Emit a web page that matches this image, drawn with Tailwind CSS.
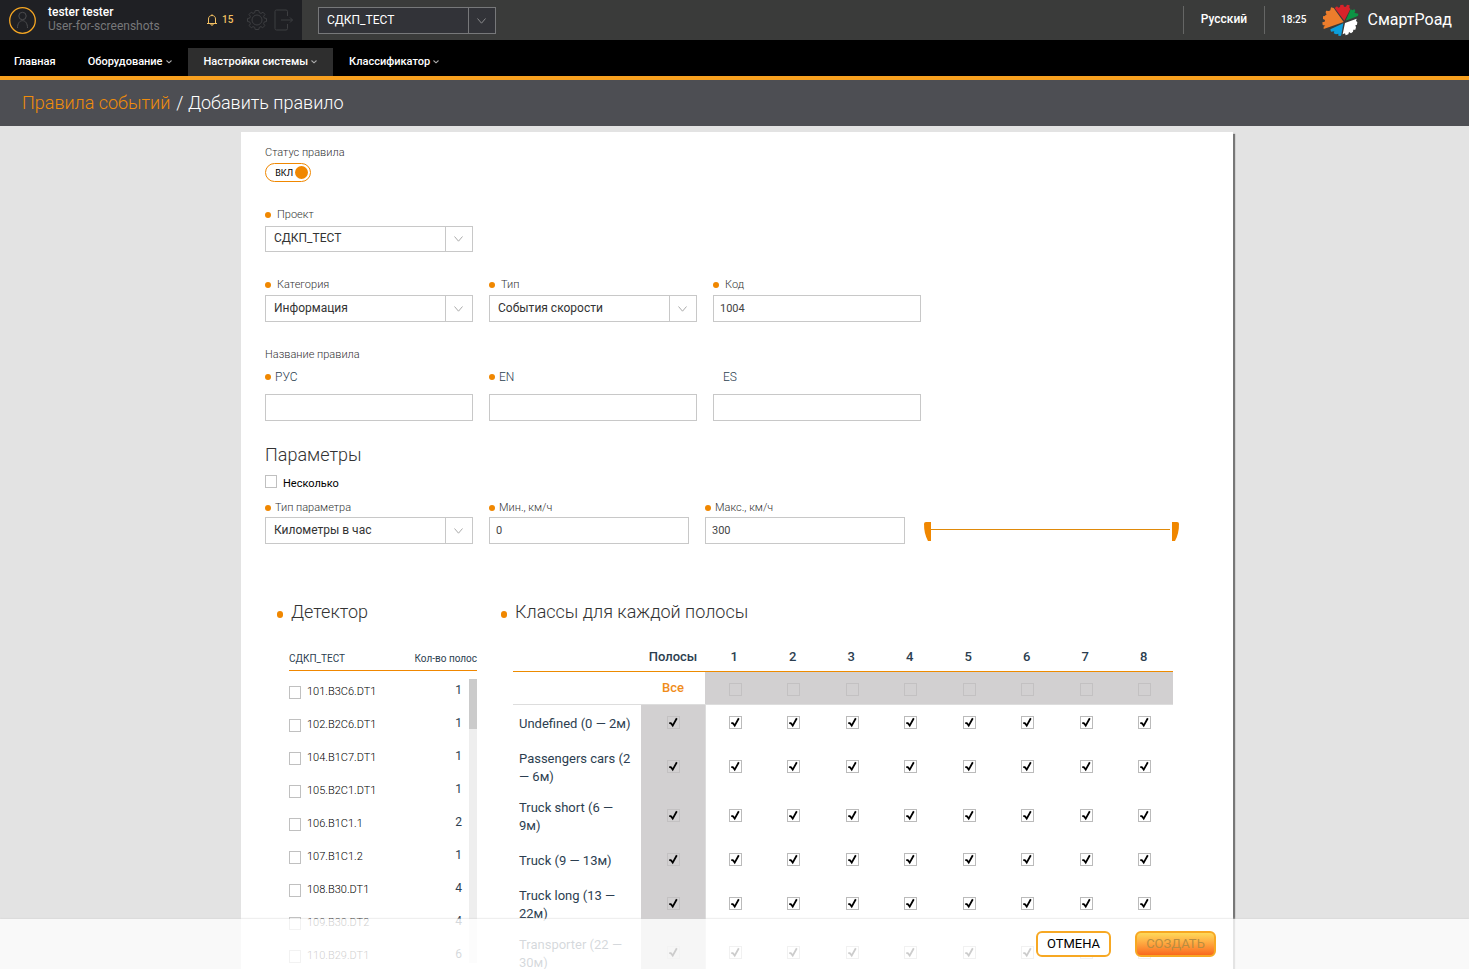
<!DOCTYPE html>
<html lang="ru">
<head>
<meta charset="utf-8">
<title>СмартРоад — Добавить правило</title>
<script src="https://cdn.jsdelivr.net/npm/@tailwindcss/browser@4"></script>
</head>
<body class="relative flex h-screen flex-col overflow-hidden bg-[#e3e3e3] font-['Roboto','Open_Sans',sans-serif] text-xs text-[#333]">
<svg class="hidden">
  <symbol id="tick" viewBox="0 0 13 13"><path d="M2.300 6.800 L4 7.300 L5.700 9.600 L9.800 2.300" fill="none" stroke="#000" stroke-width="1.800"/></symbol>
  <symbol id="down" viewBox="0 0 9 6"><path d="M.5 .5 L4.5 5.2 L8.5 .5" fill="none" stroke="currentColor"/></symbol>
  <symbol id="caret" viewBox="0 0 6 4"><path d="M.5 .5 L3 2.8 L5.5 .5" fill="none" stroke="currentColor" stroke-width="1.1"/></symbol>
</svg>

<header class="flex h-10 shrink-0 bg-[#3a3b3a] text-white">
  <div class="flex h-10 w-[302px] items-center bg-[#1f2024] pl-[9px]">
    <svg class="h-[27px] w-[27px]" viewBox="0 0 27 27" fill="none"><circle cx="13.5" cy="13.5" r="12.8" stroke="#f5a623" stroke-width="1.3"/><circle cx="13.5" cy="9" r="3.7" stroke="#4c4c4e"/><path d="M8.5 21 C8.5 16.5 10.5 13.7 13.5 13.7 C16.500 13.7 18.500 16.5 18.500 21" stroke="#4c4c4e"/></svg>
    <div class="ml-3 w-[158px] pb-[2px] leading-[14px]">
      <div class="font-medium">tester tester</div>
      <div class="text-[#77787a]">User-for-screenshots</div>
    </div>
    <button class="flex items-center gap-1 text-[10px] font-medium text-[#f3c062]" aria-label="Уведомления">
      <svg class="h-3 w-3" viewBox="0 0 12 12" fill="none" stroke="currentColor"><path d="M1 9.5 H11 M2.500 9.300 V5 C2.500 2.600 4 1.500 6 1.500 C8 1.500 9.500 2.600 9.500 5 V9.300 M4.800 10 C4.800 11.800 7.200 11.800 7.200 10 M6 .3 V1.500"/></svg>15
    </button>
    <button class="ml-[13px]" aria-label="Настройки"><svg class="h-[22px] w-[22px]" viewBox="0 0 22 22" fill="none" stroke="#3d3e41"><circle cx="11" cy="11" r="5"/><path stroke-linejoin="round" d="M9.200 1.500 H12.800 L13.300 3.700 L15 4.400 L17 3.200 L19 5.500 L17.600 7.300 L18.300 9.100 L20.500 9.500 V12.500 L18.300 12.900 L17.600 14.700 L18.800 16.600 L16.700 18.800 L15 17.600 L13.300 18.300 L12.800 20.500 H9.200 L8.700 18.300 L7 17.600 L5.300 18.800 L3.200 16.600 L4.400 14.700 L3.700 12.900 L1.500 12.500 V9.500 L3.700 9.100 L4.400 7.300 L3 5.500 L5.300 3.200 L7 4.400 L8.700 3.700 Z"/></svg></button>
    <button class="ml-[6px]" aria-label="Выход"><svg class="h-[22px] w-5" viewBox="0 0 20 22" fill="none" stroke="#3d3e41"><path d="M13.500 7 V2.500 Q13.500 1 12 1 H2.500 Q1 1 1 2.500 V19.500 Q1 21 2.500 21 H12 Q13.500 21 13.500 19.500 V15 M7 11 H18.500 M16 8.500 L18.500 11 L16 13.500"/></svg></button>
  </div>
  <div class="relative mt-[7px] ml-4 h-[27px] w-[178px]">
    <select aria-label="Проект" class="h-full w-full appearance-none border border-[#77787a] bg-[#323338] pr-8 pb-[2px] pl-2 text-xs text-white"><option>СДКП_ТЕСТ</option></select>
    <span class="pointer-events-none absolute inset-y-0 right-0 flex w-7 items-center justify-center border border-[#77787a] pr-[2px] text-[#88898b]"><svg class="h-[6px] w-[9px]"><use href="#down"/></svg></span>
  </div>
  <div class="ml-auto flex items-center pr-[17px]">
    <span class="h-7 w-px bg-[#656665]"></span>
    <button class="px-[17px] pb-[2px] text-xs font-medium">Русский</button>
    <span class="h-7 w-px bg-[#656665]"></span>
    <span class="px-4 text-[10px] font-medium">18:25</span>
    <svg class="h-[33px] w-[37px]" viewBox="488 12 111 99">
      <path fill="#ec7d2c" d="M553 66 L523 24 L515 22 L513 31 L509 33 L500 32 L499 39 L502 43 L496 48 L491 49 L491 57 L497 60 L496 65 L489 67 L490 75 L498 77 L493 80 L493 87 Z"/>
      <path fill="#d8232a" d="M555 62 L526 24 L533 19 L537 23 L542 21 L543 15 L552 14 L554 20 L560 20 L563 14 L571 16 L570 23 L573 27 Z"/>
      <path fill="#0c9444" d="M559 62 L574 28 L580 31 L585 27 L588 34 L585 38 L590 40 L597 41 L596 47 L590 50 Z"/>
      <path fill="#fff" d="M557 69 L592 56 L590 63 L594 66 L593 74 L588 76 L590 82 L588 89 L582 89 L581 95 L575 100 L569 96 L567 103 L559 106 L557 100 L550 103 Z"/>
      <path fill="#0c9fdc" d="M552 70 L546 104 L544 108 L537 107 L537 101 L530 103 L523 100 L525 94 L515 95 L513 88 Z"/>
    </svg>
    <span class="ml-2 text-base">СмартРоад</span>
  </div>
</header>

<nav class="flex h-10 shrink-0 items-end border-b-4 border-[#f7a01f] bg-black text-[11px] font-medium text-white">
  <a href="#" class="flex h-7 items-center pr-4 pl-[14px]">Главная</a>
  <a href="#" class="flex h-7 items-center gap-[3px] px-4">Оборудование<svg class="h-1 w-[6px] text-[#aaa]"><use href="#caret"/></svg></a>
  <a href="#" class="flex h-7 items-center gap-[3px] bg-[#2e2e2e] px-4">Настройки системы<svg class="h-1 w-[6px] text-[#aaa]"><use href="#caret"/></svg></a>
  <a href="#" class="flex h-7 items-center gap-[3px] px-4">Классификатор<svg class="h-1 w-[6px] text-[#aaa]"><use href="#caret"/></svg></a>
</nav>

<h1 class="flex h-[46px] shrink-0 items-center gap-[6px] bg-[#4d4e53] px-[22px] text-lg font-light text-white"><a href="#" class="text-[#f08c0a]">Правила событий</a><span>/ Добавить правило</span></h1>

<main class="min-h-0 flex-1 overflow-y-auto pt-[6px] pl-[5px] [scrollbar-width:none]">
  <form class="mx-auto w-full max-w-[992px] bg-white px-6 pt-[13px] shadow-[2px_2px_1px_#777]">
    <div class="text-[11px] leading-4 font-light">Статус правила</div>
    <button type="button" role="switch" aria-checked="true" class="mt-[2px] flex h-[19px] w-[46px] items-center justify-end gap-[2px] rounded-full border border-[#f08700] pr-[2px] text-[9px] text-black">ВКЛ<span class="h-[13px] w-[13px] rounded-full bg-[#f08700]"></span></button>

    <div class="mt-[25px] w-52">
      <label for="project" class="flex items-center gap-[6px] text-[11px] leading-4 font-light"><i class="h-[6px] w-[6px] rounded-full bg-[#f08700]"></i>Проект</label>
      <div class="relative mt-[3px] h-[26px]">
        <select id="project" class="h-full w-full appearance-none border border-[#c8c8c8] bg-white pr-8 pb-[2px] pl-2 text-xs text-[#333]"><option>СДКП_ТЕСТ</option></select>
        <span class="pointer-events-none absolute inset-y-0 right-0 flex w-7 items-center justify-center border border-[#c8c8c8] pr-[2px] text-[#aaa]"><svg class="h-[6px] w-[9px]"><use href="#down"/></svg></span>
      </div>
    </div>

    <div class="mt-[25px] flex gap-4">
      <div class="w-52">
        <label for="category" class="flex items-center gap-[6px] text-[11px] leading-4 font-light"><i class="h-[6px] w-[6px] rounded-full bg-[#f08700]"></i>Категория</label>
        <div class="relative mt-[2px] h-[27px]">
          <select id="category" class="h-full w-full appearance-none border border-[#c8c8c8] bg-white pr-8 pb-[2px] pl-2 text-xs text-[#333]"><option>Информация</option></select>
          <span class="pointer-events-none absolute inset-y-0 right-0 flex w-7 items-center justify-center border border-[#c8c8c8] pr-[2px] text-[#aaa]"><svg class="h-[6px] w-[9px]"><use href="#down"/></svg></span>
        </div>
      </div>
      <div class="w-52">
        <label for="kind" class="flex items-center gap-[6px] text-[11px] leading-4 font-light"><i class="h-[6px] w-[6px] rounded-full bg-[#f08700]"></i>Тип</label>
        <div class="relative mt-[2px] h-[27px]">
          <select id="kind" class="h-full w-full appearance-none border border-[#c8c8c8] bg-white pr-8 pb-[2px] pl-2 text-xs text-[#333]"><option>События скорости</option></select>
          <span class="pointer-events-none absolute inset-y-0 right-0 flex w-7 items-center justify-center border border-[#c8c8c8] pr-[2px] text-[#aaa]"><svg class="h-[6px] w-[9px]"><use href="#down"/></svg></span>
        </div>
      </div>
      <div class="w-52">
        <label for="code" class="flex items-center gap-[6px] text-[11px] leading-4 font-light"><i class="h-[6px] w-[6px] rounded-full bg-[#f08700]"></i>Код</label>
        <input id="code" value="1004" class="mt-[2px] block h-[27px] w-full border border-[#c8c8c8] px-[6px] text-[11px] text-[#444]">
      </div>
    </div>

    <div class="mt-[25px] text-[11px] leading-4 font-light">Название правила</div>
    <div class="mt-[6px] flex gap-4 text-[#2c3e50]">
      <div class="w-52">
        <label for="name-ru" class="flex items-center gap-1 leading-4 font-light"><i class="h-[6px] w-[6px] rounded-full bg-[#f08700]"></i>РУС</label>
        <input id="name-ru" class="mt-[9px] block h-[27px] w-full border border-[#c8c8c8] px-[6px] text-[11px]">
      </div>
      <div class="w-52">
        <label for="name-en" class="flex items-center gap-1 leading-4 font-light"><i class="h-[6px] w-[6px] rounded-full bg-[#f08700]"></i>EN</label>
        <input id="name-en" class="mt-[9px] block h-[27px] w-full border border-[#c8c8c8] px-[6px] text-[11px]">
      </div>
      <div class="w-52">
        <label for="name-es" class="block pl-[10px] leading-4 font-light">ES</label>
        <input id="name-es" class="mt-[9px] block h-[27px] w-full border border-[#c8c8c8] px-[6px] text-[11px]">
      </div>
    </div>

    <h2 class="mt-[22px] text-lg leading-6 font-light">Параметры</h2>
    <label class="mt-2 flex h-[17px] items-start gap-[6px] text-[11px] leading-[17px] text-black"><input type="checkbox" class="h-[13px] w-3 appearance-none border border-[#c0c0c0]">Несколько</label>
    <div class="mt-2 flex gap-4">
      <div class="w-52">
        <label for="param" class="flex items-center gap-1 text-[11px] leading-4 font-light"><i class="h-[6px] w-[6px] rounded-full bg-[#f08700]"></i>Тип параметра</label>
        <div class="relative mt-[1px] h-[27px]">
          <select id="param" class="h-full w-full appearance-none border border-[#c8c8c8] bg-white pr-8 pb-[2px] pl-2 text-xs text-[#333]"><option>Километры в час</option></select>
          <span class="pointer-events-none absolute inset-y-0 right-0 flex w-7 items-center justify-center border border-[#c8c8c8] pr-[2px] text-[#aaa]"><svg class="h-[6px] w-[9px]"><use href="#down"/></svg></span>
        </div>
      </div>
      <div class="w-[200px]">
        <label for="min" class="flex items-center gap-1 text-[11px] leading-4 font-light"><i class="h-[6px] w-[6px] rounded-full bg-[#f08700]"></i>Мин., км/ч</label>
        <input id="min" value="0" class="mt-[1px] block h-[27px] w-full border border-[#c8c8c8] px-[6px] text-[11px] text-[#444]">
      </div>
      <div class="w-[200px]">
        <label for="max" class="flex items-center gap-1 text-[11px] leading-4 font-light"><i class="h-[6px] w-[6px] rounded-full bg-[#f08700]"></i>Макс., км/ч</label>
        <input id="max" value="300" class="mt-[1px] block h-[27px] w-full border border-[#c8c8c8] px-[6px] text-[11px] text-[#444]">
      </div>
      <div class="mb-[2px] ml-[3px] flex h-5 w-[255px] items-start self-end" role="group" aria-label="Диапазон скорости">
        <svg class="h-5 w-[7px]" viewBox="0 0 7 20"><path d="M0 2 Q0 0 2 0 H7 V19 H4 Q0 12 0 2Z" fill="#f08700"/></svg>
        <span class="mt-[7px] mr-[2px] h-px flex-1 bg-[#e08a0a]"></span>
        <svg class="h-5 w-[7px]" viewBox="0 0 7 20"><path d="M7 2 Q7 0 5 0 H0 V19 H3 Q7 12 7 2Z" fill="#f08700"/></svg>
      </div>
    </div>

    <div class="mt-14 flex gap-6 pl-3">
      <section class="w-[200px]">
        <h2 class="flex items-center gap-2 text-lg leading-6 font-light"><i class="mt-1 h-[7px] w-[6px] rounded-full bg-[#f08700]"></i>Детектор</h2>
        <div class="mt-6 ml-3 flex h-[23px] justify-between border-b border-[#f08700] pt-[3px] text-[10px] leading-4 text-[#2c3e50]"><span>СДКП_ТЕСТ</span><span>Кол-во полос</span></div>
        <div class="mt-2 ml-3 flex h-[284px] justify-between overflow-hidden">
          <ul id="detectors" class="w-[173px]"></ul>
          <div class="w-2 bg-[#eee]"><div class="h-[50px] bg-[#cbcbcb]"></div></div>
        </div>
      </section>
      <section class="w-[672px]">
        <h2 class="flex items-center gap-2 text-lg leading-6 font-light"><i class="mt-1 h-[7px] w-[6px] rounded-full bg-[#f08700]"></i>Классы для каждой полосы</h2>
        <table class="mt-5 ml-3 w-[660px] table-fixed border-collapse text-[13px] leading-[18px] text-[#2c3e50]">
          <colgroup><col class="w-32"><col class="w-16"></colgroup>
          <thead>
            <tr class="h-[27px] border-b border-[#ed8b00]"><th></th><th class="font-medium">Полосы</th><th class="font-medium">1</th><th class="font-medium">2</th><th class="font-medium">3</th><th class="font-medium">4</th><th class="font-medium">5</th><th class="font-medium">6</th><th class="font-medium">7</th><th class="font-medium">8</th></tr>
          </thead>
          <tbody id="classes"></tbody>
        </table>
      </section>
    </div>
  </form>
</main>

<footer class="absolute inset-x-0 bottom-0 flex h-[50px] bg-white/80 pl-[5px] shadow-[0_0_2px_#ccc]">
  <div class="mx-auto flex w-full max-w-[992px] items-start justify-end gap-6 pt-3 pr-[17px]">
    <button class="h-[26px] w-[75px] rounded-[6px] border-2 border-[#f7a823] bg-white text-[13px] text-black">ОТМЕНА</button>
    <button disabled class="h-[26px] w-[81px] rounded-[6px] border-2 border-[#f7a823] bg-linear-to-b from-[#fdd95a] to-[#f9681d] text-[13px] text-[#b98d3f]">СОЗДАТЬ</button>
  </div>
</footer>

<script>
const detectors = [['101.B3C6.DT1',1],['102.B2C6.DT1',1],['104.B1C7.DT1',1],['105.B2C1.DT1',1],['106.B1C1.1',2],['107.B1C1.2',1],['108.B30.DT1',4],['109.B30.DT2',4],['110.B29.DT1',6]];
document.getElementById('detectors').innerHTML = detectors.map(([name, lanes]) => `
  <li class="flex h-[33px] items-start justify-between text-[#2c3e50] last:h-5">
    <label class="flex items-center pt-[5px] text-[11px] leading-4 font-light text-black"><input type="checkbox" class="mr-[6px] h-[13px] w-3 appearance-none border border-[#c0c0c0]">${name}</label>
    <span class="pt-[3px] leading-4">${lanes}</span>
  </li>`).join('');

const lanes = [1,2,3,4,5,6,7,8];
const classes = [['Undefined (0 — 2м)',0],['Passengers cars (2 — 6м)',1],['Truck short (6 — 9м)',1],['Truck (9 — 13м)',0],['Truck long (13 — 22м)',1],['Transporter (22 — 30м)',1]];
const box = (label, on, muted) => `<span class="relative mx-auto block h-[13px] w-[13px]"><input type="checkbox" aria-label="${label}" ${on ? 'checked' : ''} class="peer block h-[13px] w-[13px] appearance-none border ${muted ? 'border-[#c3c1c2]' : 'border-[#bbb]'}"><svg class="pointer-events-none absolute inset-0 hidden h-[13px] w-[13px] peer-checked:block"><use href="#tick"/></svg></span>`;
document.getElementById('classes').innerHTML =
  `<tr class="h-[33px] border-b border-[#ddd]"><td></td><th class="font-medium text-[#f08c1a]">Все</th>${lanes.map(n => `<td class="bg-[#d2d0d1] pt-1 pl-[2px]">${box('Полоса ' + n, false, true)}</td>`).join('')}</tr>` +
  classes.map(([name, tall]) => `<tr class="${tall ? 'h-[49px]' : 'h-[39px]'}"><th class="px-[6px] text-left font-normal">${name}</th><td class="border-r border-[#ddd] bg-[#d2d0d1] pb-[2px] pl-[2px]">${box(name, true, true)}</td>${lanes.map(n => `<td class="pb-[2px] pl-[2px]">${box(name + ', полоса ' + n, true, false)}</td>`).join('')}</tr>`).join('');
</script>
</body>
</html>
